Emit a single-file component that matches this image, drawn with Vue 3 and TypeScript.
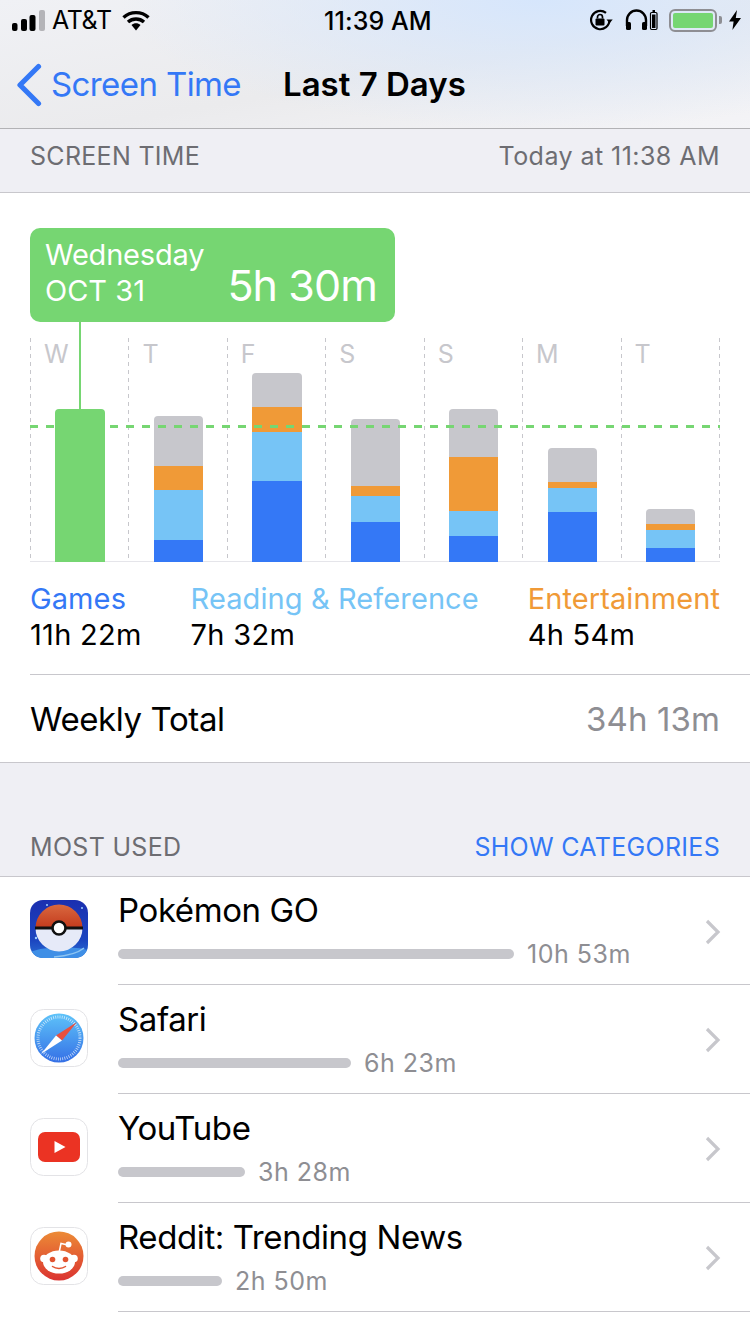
<script setup lang="ts">
interface Day {
  label: string
  segs: { color: string; h: number }[]
}

const gray = '#c7c7cc'
const orange = '#f09a37'
const light = '#76c4f6'
const blue = '#3478f6'

const stack = (g: number, o: number, l: number, b: number) => [
  { color: gray, h: g },
  { color: orange, h: o },
  { color: light, h: l },
  { color: blue, h: b }
]

const days: Day[] = [
  { label: 'W', segs: [{ color: '#76d672', h: 153 }] },
  { label: 'T', segs: stack(50, 24, 50, 22) },
  { label: 'F', segs: stack(34, 25, 49, 81) },
  { label: 'S', segs: stack(67, 10, 26, 40) },
  { label: 'S', segs: stack(48, 54, 25, 26) },
  { label: 'M', segs: stack(34, 6, 24, 50) },
  { label: 'T', segs: stack(15, 6, 18, 14) }
]

const legend = [
  { name: 'Games', value: '11h 22m', cls: 'c-blue' },
  { name: 'Reading & Reference', value: '7h 32m', cls: 'c-light' },
  { name: 'Entertainment', value: '4h 54m', cls: 'c-orange' }
]

const apps = [
  { name: 'Pokémon GO', time: '10h 53m', bar: 396, icon: 'pokemon' },
  { name: 'Safari', time: '6h 23m', bar: 233, icon: 'safari' },
  { name: 'YouTube', time: '3h 28m', bar: 127, icon: 'youtube' },
  { name: 'Reddit: Trending News', time: '2h 50m', bar: 104, icon: 'reddit' }
]
</script>

<template>
  <div class="screen">
    <header class="nav">
      <div class="status">
        <svg class="signal" width="34" height="22" viewBox="0 0 34 22">
          <rect x="0" y="13" width="5.5" height="8" rx="2" fill="#000" />
          <rect x="9" y="9" width="6" height="12" rx="2" fill="#000" />
          <rect x="17.5" y="5" width="6" height="16" rx="2" fill="#000" />
          <rect x="27" y="0" width="6" height="21" rx="2" fill="#b4b4b8" />
        </svg>
        <span class="carrier">AT&amp;T</span>
        <svg class="wifi" width="28" height="21" viewBox="0 0 28 21">
          <path d="M1.5 7.5C8.5 1 19.5 1 26.5 7.5" fill="none" stroke="#000" stroke-width="3.4" />
          <path d="M6 12C10.5 8 17.5 8 22 12" fill="none" stroke="#000" stroke-width="3.4" />
          <path d="M9.5 15C12 12.6 16 12.6 18.5 15L14 20.5Z" fill="#000" />
        </svg>
        <span class="clock">11:39 AM</span>
        <svg class="rotlock" width="24" height="22" viewBox="0 0 24 22">
          <path d="M20.5 11A9.2 9.2 0 1 1 17 3.8" fill="none" stroke="#000" stroke-width="2.2" />
          <path d="M17.5 10.500h6.2l-3.1 3.8Z" fill="#000" />
          <rect x="6.500" y="9.500" width="9" height="7" rx="1" fill="#000" />
          <path d="M8.500 9.500V8a2.500 2.500 0 0 1 5 0v1.500" fill="none" stroke="#000" stroke-width="1.700" />
        </svg>
        <svg class="phones" width="33" height="22" viewBox="0 0 33 22">
          <path d="M2 17V11a9.500 9.500 0 0 1 19 0v6" fill="none" stroke="#000" stroke-width="2.400" />
          <rect x="1" y="13" width="5" height="8" rx="1.600" fill="#000" />
          <rect x="17" y="13" width="5" height="8" rx="1.600" fill="#000" />
          <rect x="25.500" y="3.500" width="6.500" height="17" rx="1.200" fill="none" stroke="#000" stroke-width="1.200" />
          <rect x="27" y="5.500" width="3.500" height="13.500" fill="#000" />
          <rect x="27.500" y="1" width="2.500" height="2" fill="#000" />
        </svg>
        <div class="battery"><div class="battery-fill"></div></div>
        <div class="battery-nub"></div>
        <svg class="bolt" width="12" height="20" viewBox="0 0 12 20">
          <path d="M8 0 0 11.500h4.600L3.400 20 12 8H6.800Z" fill="#000" />
        </svg>
      </div>
      <div class="nav-bar">
        <svg class="back-icon" width="26" height="44" viewBox="0 0 26 44">
          <path d="M22.500 3.500 4 22l18.500 18.500" fill="none" stroke="#3478f6" stroke-width="5.200" stroke-linecap="round" stroke-linejoin="round" />
        </svg>
        <span class="back-label">Screen Time</span>
        <span class="nav-title">Last 7 Days</span>
      </div>
    </header>

    <div class="section-head top-head">
      <span>SCREEN TIME</span>
      <span class="updated">Today at 11:38 AM</span>
    </div>

    <section class="summary">
      <div class="chart">
        <div class="tip">
          <div class="tip-date">
            <div class="tip-day">Wednesday</div>
            <div class="tip-month">OCT 31</div>
          </div>
          <div class="tip-time">5h 30m</div>
        </div>
        <div class="tip-stem"></div>
        <div class="week">
          <div v-for="(d, i) in days" :key="i" class="day">
            <span class="day-label">{{ d.label }}</span>
            <div class="bar">
              <div
                v-for="(s, j) in d.segs"
                :key="j"
                :style="{ height: s.h + 'px', background: s.color }"
              ></div>
            </div>
          </div>
        </div>
        <div class="average"></div>
      </div>

      <div class="legend">
        <div v-for="item in legend" :key="item.name" class="legend-item">
          <div :class="item.cls">{{ item.name }}</div>
          <div class="legend-value">{{ item.value }}</div>
        </div>
      </div>

      <div class="weekly">
        <span>Weekly Total</span>
        <span class="weekly-value">34h 13m</span>
      </div>
    </section>

    <div class="section-head most-head">
      <span>MOST USED</span>
      <span class="c-blue">SHOW CATEGORIES</span>
    </div>

    <section class="apps">
      <div v-for="app in apps" :key="app.name" class="app-row">
        <svg class="app-icon" width="58" height="58" viewBox="0 0 58 58">
          <defs>
            <clipPath id="clip-icon"><rect width="58" height="58" rx="13" /></clipPath>
            <linearGradient id="poke-bg" x1="0" y1="0" x2="0" y2="1">
              <stop offset="0" stop-color="#1a2fb0" />
              <stop offset="0.7" stop-color="#1c46c0" />
              <stop offset="1" stop-color="#2a6fd4" />
            </linearGradient>
            <linearGradient id="poke-red" x1="0" y1="0" x2="0" y2="1">
              <stop offset="0" stop-color="#d9683f" />
              <stop offset="1" stop-color="#c33a1c" />
            </linearGradient>
            <linearGradient id="safari-bg" x1="0" y1="0" x2="0" y2="1">
              <stop offset="0" stop-color="#5ec3f9" />
              <stop offset="1" stop-color="#3570e6" />
            </linearGradient>
            <linearGradient id="reddit-bg" x1="0" y1="0" x2="0" y2="1">
              <stop offset="0" stop-color="#ec8b36" />
              <stop offset="1" stop-color="#db3330" />
            </linearGradient>
          </defs>

          <g v-if="app.icon === 'pokemon'" clip-path="url(#clip-icon)">
            <rect width="58" height="58" fill="url(#poke-bg)" />
            <path d="M0 52C14 46 44 46 58 50V58H0Z" fill="#3f8fe6" />
            <path d="M24 57C36 56 48 53 54 48" fill="none" stroke="#8cc4f2" stroke-width="1.600" />
            <circle cx="6" cy="38" r="1.200" fill="#9fd0ff" />
            <circle cx="52" cy="8" r="1" fill="#9fd0ff" />
            <circle cx="17" cy="5" r="1" fill="#9fd0ff" />
            <path d="M5.500 28a23.500 23.500 0 0 1 47 0Z" fill="url(#poke-red)" />
            <path d="M5.500 28a23.500 23.500 0 0 0 47 0Z" fill="#e6eaf8" />
            <rect x="5" y="26.500" width="48" height="3" fill="#111" />
            <circle cx="29" cy="28" r="6.500" fill="#fff" stroke="#111" stroke-width="2.600" />
          </g>

          <g v-else-if="app.icon === 'safari'">
            <rect x="0.500" y="0.500" width="57" height="57" rx="13" fill="#fff" stroke="#e3e3e6" />
            <circle cx="29" cy="29" r="24.500" fill="url(#safari-bg)" />
            <circle cx="29" cy="29" r="21" fill="none" stroke="#fff" stroke-opacity="0.7" stroke-width="3" stroke-dasharray="0.8 1.4" />
            <path d="M47 13 32 31.500 26 26.500Z" fill="#e8503f" />
            <path d="M11 45 26 26.500 32 31.500Z" fill="#fff" />
          </g>

          <g v-else-if="app.icon === 'youtube'">
            <rect x="0.500" y="0.500" width="57" height="57" rx="13" fill="#fff" stroke="#e3e3e6" />
            <rect x="8" y="14" width="42" height="30" rx="7" fill="#eb3323" />
            <path d="M24.500 23 35.500 29 24.500 35Z" fill="#fff" />
          </g>

          <g v-else>
            <rect x="0.500" y="0.500" width="57" height="57" rx="13" fill="#fff" stroke="#e3e3e6" />
            <circle cx="29" cy="29" r="24.500" fill="url(#reddit-bg)" />
            <path d="M29 26 31 16.500 38 18" fill="none" stroke="#fff" stroke-width="1.500" />
            <circle cx="38.500" cy="17.500" r="3" fill="#fff" />
            <circle cx="14" cy="31.500" r="3.800" fill="#fff" />
            <circle cx="44" cy="31.500" r="3.800" fill="#fff" />
            <ellipse cx="29" cy="35" rx="16" ry="11.500" fill="#fff" />
            <circle cx="22.500" cy="32.500" r="2.800" fill="#e2532f" />
            <circle cx="35.500" cy="32.500" r="2.800" fill="#e2532f" />
            <path d="M22.500 39.500C26 42 32 42 35.500 39.500" fill="none" stroke="#e2532f" stroke-width="1.500" stroke-linecap="round" />
          </g>
        </svg>
        <div class="app-body">
          <div class="app-name">{{ app.name }}</div>
          <div class="app-usage">
            <div class="usage-bar" :style="{ width: app.bar + 'px' }"></div>
            <span class="usage-time">{{ app.time }}</span>
          </div>
          <svg class="chevron" width="18" height="28" viewBox="0 0 18 28">
            <path d="M3 3 14 14 3 25" fill="none" stroke="#c7c7cc" stroke-width="3.200" />
          </svg>
        </div>
      </div>
    </section>
  </div>
</template>

<style scoped>
.screen {
  position: relative;
  width: 750px;
  height: 1334px;
  overflow: hidden;
  background: #fff;
  font-family: Inter, "Liberation Sans", sans-serif;
  color: #000;
}

.nav {
  height: 128px;
  border-bottom: 1px solid #b2b2b5;
  background:
    radial-gradient(ellipse 420px 130px at 72% 0, #d6e6fc 0, rgba(214, 230, 252, 0) 100%),
    linear-gradient(170deg, #f0f1f5 0, #ebebed 55%, #f4f4f7 100%);
}

.status {
  height: 40px;
  display: flex;
  align-items: center;
  padding-left: 12px;
  font-size: 25px;
}

.signal { margin-top: 1px; }

.carrier {
  margin-left: 6px;
  letter-spacing: -0.4px;
}

.wifi { margin-left: 10px; }

.clock {
  position: absolute;
  left: 324px;
  top: 5px;
  line-height: 32px;
  font-weight: 500;
  letter-spacing: 0.1px;
}

.rotlock { margin-left: auto; }

.phones { margin-left: 12px; }

.battery {
  margin-left: 11px;
  width: 48px;
  height: 23px;
  box-sizing: border-box;
  border: 2px solid #8e8e93;
  border-radius: 6px;
  padding: 2px;
}

.battery-fill {
  height: 100%;
  border-radius: 2px;
  background: #76d672;
}

.battery-nub {
  width: 3px;
  height: 8px;
  margin-left: 2px;
  border-radius: 0 2px 2px 0;
  background: #8e8e93;
}

.bolt { margin: 0 9px 0 7px; }

.nav-bar {
  height: 88px;
  display: flex;
  align-items: center;
  padding-left: 16px;
  font-size: 33px;
  letter-spacing: -0.6px;
}

.back-icon { margin-top: 2px; }

.back-label {
  margin-left: 9px;
  color: #3478f6;
}

.nav-title {
  margin-left: 42px;
  font-weight: 600;
  letter-spacing: 0;
}

.section-head {
  display: flex;
  justify-content: space-between;
  box-sizing: border-box;
  padding: 0 30px;
  background: #efeff4;
  border-bottom: 1px solid #c8c7cc;
  font-size: 25px;
  letter-spacing: 0.3px;
  color: #6d6d72;
}

.top-head {
  height: 64px;
  padding-top: 12px;
}

.updated { letter-spacing: 0.45px; }

.most-head {
  height: 114px;
  align-items: flex-end;
  padding-bottom: 14px;
}

.summary {
  background: #fff;
  border-bottom: 1px solid #c8c7cc;
}

.chart {
  position: relative;
  margin: 0 30px;
  padding-top: 35px;
}

.tip {
  width: 365px;
  height: 94px;
  box-sizing: border-box;
  padding: 9px 18px 0 15px;
  display: flex;
  justify-content: space-between;
  border-radius: 10px;
  background: #76d672;
  color: #fff;
}

.tip-day {
  font-size: 29px;
  line-height: 36px;
  letter-spacing: -0.2px;
}

.tip-month {
  font-size: 29px;
  line-height: 36px;
  letter-spacing: 0;
}

.tip-time {
  margin-top: 22px;
  font-size: 43px;
  line-height: 52px;
  letter-spacing: -0.9px;
}

.tip-stem {
  position: absolute;
  left: 49px;
  top: 129px;
  width: 2px;
  height: 87px;
  background: #76d672;
}

.week {
  margin-top: 16px;
  height: 224px;
  display: grid;
  grid-template-columns: repeat(6, 98.43px) 1fr;
  border-bottom: 1px solid #e5e5ea;
  box-sizing: border-box;
}

.day {
  display: flex;
  flex-direction: column;
  align-items: flex-start;
  justify-content: space-between;
  background: repeating-linear-gradient(180deg, #c7c7cc 0, #c7c7cc 4px, transparent 4px, transparent 8px) left top / 1px 100% no-repeat;
}

.day:last-child {
  background:
    repeating-linear-gradient(180deg, #c7c7cc 0, #c7c7cc 4px, transparent 4px, transparent 8px) left top / 1px 100% no-repeat,
    repeating-linear-gradient(180deg, #c7c7cc 0, #c7c7cc 4px, transparent 4px, transparent 8px) right top / 1px 100% no-repeat;
}

.day-label {
  margin: 1px 0 0 14px;
  font-size: 25px;
  line-height: 30px;
  color: #c7c7cc;
}

.bar {
  width: 49.4px;
  margin: 0 0 -1px 25.4px;
  border-radius: 4px 4px 0 0;
  overflow: hidden;
  position: relative;
}

.average {
  position: absolute;
  left: 0;
  right: 0;
  top: 232px;
  height: 3px;
  background: repeating-linear-gradient(90deg, #76d672 0, #76d672 8px, transparent 8px, transparent 16px);
}

.legend {
  height: 113px;
  box-sizing: border-box;
  margin-left: 30px;
  padding: 19px 30px 0 0;
  display: flex;
  justify-content: space-between;
  border-bottom: 1px solid #c8c7cc;
  font-size: 29px;
  line-height: 36px;
  letter-spacing: 0.1px;
}

.legend-value {
  color: #000;
  letter-spacing: 0.3px;
}

.c-blue { color: #3478f6; }
.c-light { color: #76c4f6; }
.c-orange { color: #f09a37; }

.weekly {
  height: 87px;
  display: flex;
  align-items: center;
  justify-content: space-between;
  padding: 0 30px;
  font-size: 33px;
  letter-spacing: -0.4px;
}

.weekly-value {
  color: #8e8e93;
  letter-spacing: 0.1px;
}

.app-row {
  display: flex;
  height: 109px;
  padding-left: 30px;
}

.app-row:first-child {
  height: 108px;
}

.app-icon {
  flex: none;
  margin-top: 24px;
}

.app-row:first-child .app-icon { margin-top: 23px; }

.app-row:first-child .app-body { padding-top: 13px; }

.app-body {
  position: relative;
  flex: 1;
  margin-left: 30px;
  padding-top: 14px;
  border-bottom: 1px solid #c8c7cc;
}

.app-name {
  font-size: 33px;
  line-height: 40px;
  letter-spacing: -0.4px;
}

.app-usage {
  display: flex;
  align-items: center;
  gap: 13px;
  margin-top: 8px;
  height: 32px;
}

.usage-bar {
  height: 10px;
  border-radius: 5px;
  background: #c7c7cc;
}

.usage-time {
  font-size: 25px;
  color: #8e8e93;
  letter-spacing: 0.5px;
}

.chevron {
  position: absolute;
  right: 28px;
  top: 41px;
}
</style>
